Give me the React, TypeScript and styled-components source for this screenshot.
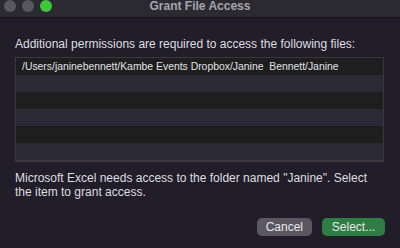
import React from "react";
import styled, { createGlobalStyle } from "styled-components";

const GlobalStyle = createGlobalStyle`
  html, body {
    margin: 0;
    padding: 0;
    background: #211e2a;
  }
  body {
    font-family: "Liberation Sans", Arial, sans-serif;
    -webkit-font-smoothing: antialiased;
  }
`;

const files = ["/Users/janinebennett/Kambe Events Dropbox/Janine\u00a0\u00a0Bennett/Janine"];
const ROW_COUNT = 6;

export default function App() {
  const rows = Array.from({ length: ROW_COUNT }, (_, i) => files[i] ?? "");

  return (
    <>
      <GlobalStyle />
      <Window>
        <TitleBar>
          <Lights>
            <Light />
            <Light />
            <Light $color="#3fc63b" />
          </Lights>
          <Title>Grant File Access</Title>
          <span />
        </TitleBar>
        <Content>
          <Prompt>Additional permissions are required to access the following files:</Prompt>
          <FileList>
            {rows.map((path, i) => (
              <FileRow key={i} $odd={i % 2 === 1}>
                {path}
              </FileRow>
            ))}
          </FileList>
          <Message>
            Microsoft Excel needs access to the folder named "Janine". Select
            the item to grant access.
          </Message>
          <Actions>
            <Button>Cancel</Button>
            <Button $primary>Select...</Button>
          </Actions>
        </Content>
      </Window>
    </>
  );
}

const Window = styled.div`
  width: 400px;
  height: 248px;
  display: flex;
  flex-direction: column;
  background: #211e2a;
  overflow: hidden;
`;

const TitleBar = styled.div`
  height: 17px;
  display: grid;
  grid-template-columns: 1fr auto 1fr;
  align-items: start;
  padding: 0 4px;
  background: #2c2a31;
  border-bottom: 1px solid #121016;
`;

const Lights = styled.div`
  display: flex;
  gap: 6px;
`;

const Light = styled.div<{ $color?: string }>`
  width: 12px;
  height: 12px;
  border-radius: 50%;
  background: ${(p) => p.$color ?? "#59575e"};
`;

const Title = styled.div`
  font-size: 12px;
  font-weight: bold;
  line-height: 12px;
  color: #a7a5ac;
`;

const Content = styled.div`
  flex: 1;
  display: flex;
  flex-direction: column;
  padding: 0 15px;
`;

const Prompt = styled.p`
  margin: 19px 0 6px;
  font-size: 12px;
  line-height: 14px;
  color: #dedde0;
  white-space: nowrap;
`;

const FileList = styled.div`
  width: 369px;
  box-sizing: border-box;
  border: 1px solid #3a383f;
  border-bottom-width: 2px;
  background: #1e1e1f;
`;

const FileRow = styled.div<{ $odd: boolean }>`
  height: 17px;
  padding: 0 6px;
  font-size: 10.4px;
  line-height: 17px;
  color: #e2e2e4;
  white-space: pre;
  background: ${(p) => (p.$odd ? "#2c2937" : "#1e1e1f")};
`;

const Message = styled.p`
  margin: 9px 0 0;
  font-size: 12px;
  line-height: 14px;
  color: #dedde0;
`;

const Actions = styled.div`
  display: flex;
  justify-content: flex-end;
  gap: 10px;
  margin-top: 19px;
`;

const Button = styled.button<{ $primary?: boolean }>`
  height: 18px;
  padding: 0 9px;
  border: none;
  border-radius: 5px;
  font-family: "Liberation Sans", Arial, sans-serif;
  font-size: 12px;
  line-height: 18px;
  color: #e8e8ea;
  background: ${(p) => (p.$primary ? "#2e7d44" : "#5a5761")};
  min-width: ${(p) => (p.$primary ? "63px" : "55px")};
`;
